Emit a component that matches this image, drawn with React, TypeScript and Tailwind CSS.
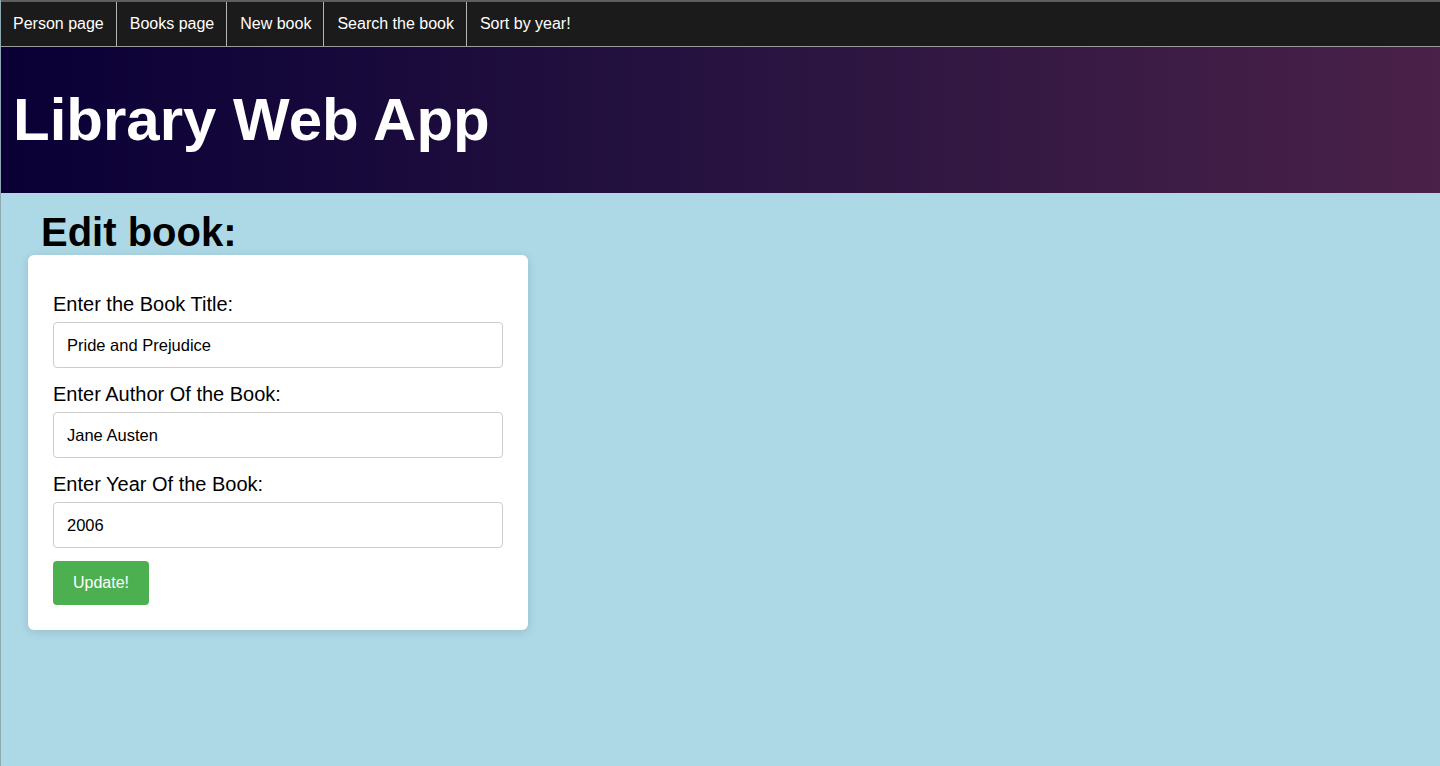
const links = ['Person page', 'Books page', 'New book', 'Search the book', 'Sort by year!'];

function Field({ label, value }: { label: string; value: string }) {
  return (
    <div className="mb-[15px]">
      <label className="block text-[20px] leading-[23px] text-black">{label}</label>
      <input
        defaultValue={value}
        className="mt-[6px] block w-[450px] h-[46px] px-[13px] text-[16.5px] text-black border border-[#cccccc] rounded-[4px] bg-white outline-none"
      />
    </div>
  );
}

export default function App() {
  return (
    <div
      className="min-h-[766px] bg-[#add8e6] border-l border-[#8fa9b3]"
      style={{ fontFamily: '"Liberation Sans", Arial, sans-serif' }}
    >
      {/* barra de navegacion */}
      <nav className="flex bg-[#1b1b1b] border-t-2 border-t-[#5f5f5f] border-b border-b-[#9a9a9a]">
        {links.map((l, i) => (
          <a
            key={l}
            href="#"
            className={
              i === 0
                ? 'px-3 h-[44px] flex items-center text-[16px] text-white border-r border-[#b5b5b5]'
                : i === links.length - 1
                ? 'pl-[13px] pr-3 h-[44px] flex items-center text-[16px] text-white'
                : 'pl-[13px] pr-3 h-[44px] flex items-center text-[16px] text-white border-r border-[#b5b5b5]'
            }
          >
            {l}
          </a>
        ))}
      </nav>

      <header className="h-[146px] bg-gradient-to-r from-[#0a0036] to-[#4a2148] pl-[12px] pt-[38px]">
        <h1 className="text-[60px] leading-[69px] font-bold text-white">Library Web App</h1>
      </header>

      <main className="pl-[27px] pt-[16px]">
        <h2 className="pl-[13px] text-[40px] leading-[46px] font-bold text-black">Edit book:</h2>
        <form
          className="w-[500px] bg-white rounded-[6px] shadow-[0_2px_10px_rgba(0,0,0,0.12)] px-[25px] pt-[38px] pb-[25px]"
          onSubmit={(e) => e.preventDefault()}
        >
          <Field label="Enter the Book Title:" value="Pride and Prejudice" />
          <Field label="Enter Author Of the Book:" value="Jane Austen" />
          <Field label="Enter Year Of the Book:" value="2006" />
          <button className="-mt-[2px] w-[96px] h-[44px] bg-[#4caf50] text-white text-[16px] rounded-[4px]">Update!</button>
        </form>
      </main>
    </div>
  );
}
